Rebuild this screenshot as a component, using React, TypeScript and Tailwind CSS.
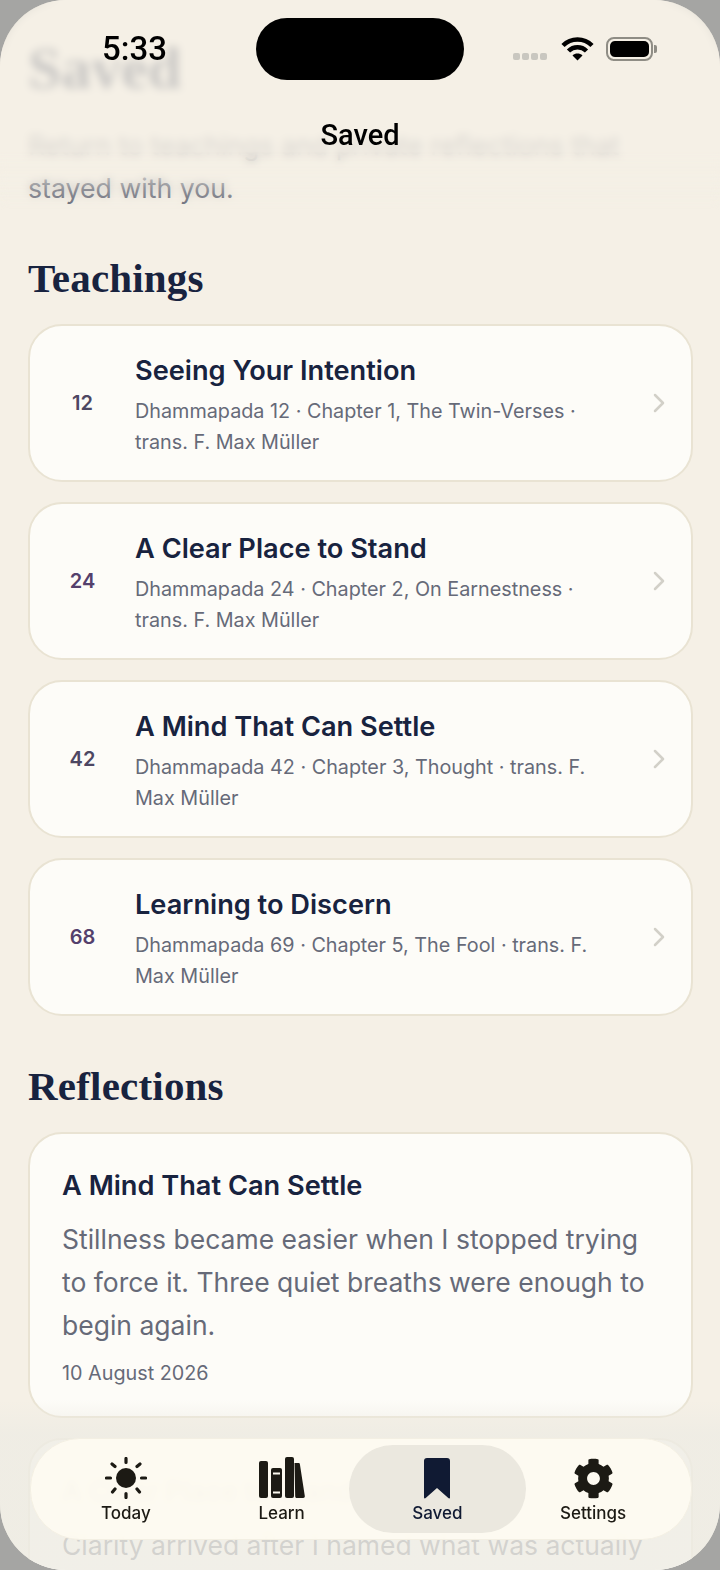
import { FaCog } from 'react-icons/fa';

const TEACHINGS = [
  { num: '12', title: 'Seeing Your Intention', meta: 'Dhammapada 12 · Chapter 1, The Twin-Verses · trans. F. Max Müller', color: 'text-[#4d4762]' },
  { num: '24', title: 'A Clear Place to Stand', meta: 'Dhammapada 24 · Chapter 2, On Earnestness · trans. F. Max Müller', color: 'text-[#54406c]' },
  { num: '42', title: 'A Mind That Can Settle', meta: 'Dhammapada 42 · Chapter 3, Thought · trans. F. Max Müller', color: 'text-[#4d4762]' },
  { num: '68', title: 'Learning to Discern', meta: 'Dhammapada 69 · Chapter 5, The Fool · trans. F. Max Müller', color: 'text-[#54406c]' },
];

function SunIcon() {
  return (
    <svg width="42" height="42" viewBox="0 0 42 42" fill="#1c1a14">
      <circle cx="21" cy="21" r="10" />
      <g stroke="#1c1a14" strokeWidth="3.2" strokeLinecap="round">
        <path d="M21 1.500v4M21 36.500v4M1.500 21h4M36.500 21h4M7 7l3 2.500M35 7l-3 2.500M7.500 35l2.500-3M34.500 35l-2.500-3" />
      </g>
    </svg>
  );
}

function BooksIcon() {
  return (
    <svg width="46" height="42" viewBox="0 0 46 42" fill="#1c1a14">
      <rect x="0" y="4" width="9" height="37" rx="2" />
      <rect x="12" y="11" width="11" height="30" rx="2" />
      <rect x="14" y="15.500" width="7" height="2" fill="#fdfaf0" />
      <rect x="14" y="34.500" width="7" height="2" fill="#fdfaf0" />
      <rect x="26" y="0" width="9" height="41" rx="2" />
      <path d="M35.500 6h4c.8 0 1.300.4 1.400 1.200L45.800 39c.2 1.200-.6 2-1.600 2H38c-1 0-1.600-.6-1.800-1.600z" />
    </svg>
  );
}

function BookmarkIcon() {
  return (
    <svg width="28" height="42" viewBox="0 0 28 42" fill="#101a33">
      <path d="M1 4a3 3 0 0 1 3-3h20a3 3 0 0 1 3 3v36.500c0 1-1 1.400-1.700.6L14 31 2.700 41.100c-.7.800-1.700.4-1.700-.6z" />
    </svg>
  );
}

function Tab({ label, active, children }: { label: string; active?: boolean; children: React.ReactNode }) {
  return (
    <div className={`flex flex-col items-center justify-center pt-[2px] rounded-[44px] ${active ? 'bg-[#ebe8df] -mx-[11px]' : ''}`}>
      <div className="h-[42px] flex items-center">{children}</div>
      <span className={`mt-[4px] text-[17px] leading-[20px] font-medium ${active ? 'text-[#101a33]' : 'text-[#1c1a14]'}`}>{label}</span>
    </div>
  );
}

export default function App() {
  return (
    <div className="relative w-[720px] h-[1570px] overflow-hidden bg-[#a5a5a3] font-['Inter',sans-serif]">
      <div className="relative h-full rounded-[66px] overflow-hidden bg-[#f5f0e6]">
        {/* scrolled page */}
        <div className="pl-[28px] pr-[27px] pt-[32px]">
          <h1 className="font-['Liberation_Serif',serif] font-bold text-[60px] leading-[72px] text-[#18233f]">Saved</h1>
          <p className="mt-[20px] text-[26.700px] leading-[43px] text-[#666a78]">
            Return to teachings and private reflections that stayed with you.
          </p>

          <h2 className="mt-[45px] font-['Liberation_Serif',serif] font-bold text-[41px] leading-[46px] tracking-[0.2px] text-[#18233f]">Teachings</h2>
          <div className="mt-[23px] flex flex-col gap-[20px]">
            {TEACHINGS.map((t) => (
              <div key={t.num} className="h-[158px] flex items-center rounded-[34px] border-2 border-[#e9e3d3] bg-[#fdfcf8]">
                <span className={`w-[105px] shrink-0 text-center text-[20px] font-semibold ${t.color}`}>{t.num}</span>
                <div className="flex-1 min-w-0 pt-[4px] pr-[26px]">
                  <div className="text-[27.200px] leading-[36px] font-semibold text-[#18233f] whitespace-nowrap">{t.title}</div>
                  <div className="mt-[7px] text-[19.800px] leading-[31px] text-[#666a78]">{t.meta}</div>
                </div>
                <svg className="shrink-0 mr-[25px]" width="14" height="20" viewBox="0 0 14 20" fill="none" stroke="#d2d0c8" strokeWidth="2.500" strokeLinecap="round" strokeLinejoin="round">
                  <path d="M3 2l8 8-8 8" />
                </svg>
              </div>
            ))}
          </div>

          <h2 className="mt-[47px] font-['Liberation_Serif',serif] font-bold text-[41px] leading-[46px] tracking-[0.2px] text-[#18233f]">Reflections</h2>
          <div className="mt-[23px] flex flex-col gap-[20px]">
            <div className="h-[286px] rounded-[34px] border-2 border-[#e9e3d3] bg-[#fdfcf8] px-[32px] pt-[34px]">
              <div className="text-[27.200px] leading-[36px] font-semibold text-[#18233f]">A Mind That Can Settle</div>
              <p className="mt-[14px] text-[26.500px] leading-[43px] text-[#666a78]">
                Stillness became easier when I stopped trying to force it. Three quiet breaths were enough to begin again.
              </p>
              <div className="mt-[11px] text-[19.800px] leading-[31px] text-[#666a78]">10 August 2026</div>
            </div>
            <div className="h-[286px] rounded-[34px] border-2 border-[#e9e3d3] bg-[#fdfcf8] px-[32px] pt-[34px]">
              <div className="text-[27.200px] leading-[36px] font-semibold text-[#18233f]">A Clear Place to Stand</div>
              <p className="mt-[14px] text-[26.500px] leading-[43px] text-[#666a78]">
                Clarity arrived after I named what was actually
              </p>
            </div>
          </div>
        </div>

        {/* header blur */}
        <div className="absolute inset-x-0 top-0 h-[210px] backdrop-blur-[4px] bg-[#f5f0e6]/80 [mask-image:linear-gradient(to_bottom,black_72%,transparent)]" />
        {/* bottom fade */}
        <div className="absolute inset-x-0 bottom-0 h-[170px] bg-gradient-to-b from-[#eeece4]/0 to-[#eeece4]/80 to-[20%]" />

        {/* nav title */}
        <div className="absolute inset-x-0 top-[118px] text-center font-['Roboto',sans-serif] text-[29px] leading-[34px] font-medium text-black">Saved</div>

        {/* status bar */}
        <div className="absolute left-[102px] top-[30px] font-['Roboto',sans-serif] text-[33px] leading-[38px] font-medium text-black">5:33</div>
        <div className="absolute left-[256px] top-[18px] w-[208px] h-[62px] rounded-[31px] bg-black" />
        <div className="absolute left-[513px] top-[53px] flex gap-[2px]">
          {[0, 1, 2, 3].map((i) => (
            <span key={i} className="w-[7px] h-[7px] rounded-[2px] bg-[#c9c7c0]" />
          ))}
        </div>
        <svg className="absolute left-[561px] top-[36px]" width="33" height="25" viewBox="0 0 33 25" fill="none" stroke="black" strokeWidth="4.500">
          <path d="M2 9.500c8-8 21-8 29 0" />
          <path d="M7.500 15c5-5 13-5 18 0" />
          <path d="M16.500 24.500l-5-5c2.800-2.600 7.200-2.600 10 0z" fill="black" stroke="none" />
        </svg>
        <div className="absolute left-[606px] top-[37px] w-[47px] h-[24px] rounded-[8px] border-2 border-[#8f8d85] p-[2px]">
          <div className="w-full h-full rounded-[5px] bg-black" />
        </div>
        <div className="absolute left-[654px] top-[45px] w-[3px] h-[8px] rounded-r-[2px] bg-[#8f8d85]" />

        {/* tab bar */}
        <div className="absolute left-[30px] right-[28px] top-[1438px] h-[102px] rounded-[50px] bg-[#fefbf1]/93 backdrop-blur-[3px] border border-[#f3efe3] pl-[17px] pr-[20px] py-[6px] grid grid-cols-4">
          <Tab label="Today"><SunIcon /></Tab>
          <Tab label="Learn"><BooksIcon /></Tab>
          <Tab label="Saved" active><BookmarkIcon /></Tab>
          <Tab label="Settings"><FaCog size={41} color="#1c1a14" /></Tab>
        </div>
      </div>
    </div>
  );
}
